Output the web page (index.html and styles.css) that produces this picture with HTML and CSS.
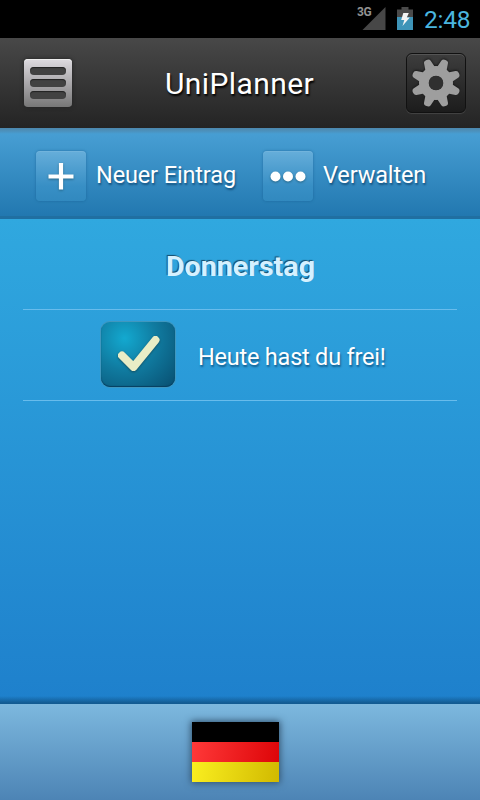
FILE: index.html
```html
<!DOCTYPE html>
<html lang="de">
<head>
<meta charset="utf-8">
<title>UniPlanner</title>
<link rel="stylesheet" href="styles.css">
</head>
<body>
<div class="screen">
  <div class="status">
    <svg class="signal" width="32" height="38" viewBox="0 0 32 38"><path d="M30.500 7V30H7.500Z" fill="#474747"/></svg>
    <span class="network">3G</span>
    <svg class="battery" width="16" height="38" viewBox="0 0 16 38"><path d="M4.500 7h7v2.500H16V17H0V9.500h4.500z" fill="#4a4a4a"/><path d="M0 17h16v13H0z" fill="#3e94b8"/><path d="M6.300 13h5.500l-2 4.600h3L5.500 26l1.800-6H4.200z" fill="#f4f4f4"/></svg>
    <span class="clock">2:48</span>
  </div>
  <header class="header">
    <div class="menu"><i></i><i></i><i></i></div>
    <h1 class="title">UniPlanner</h1>
    <div class="settings">
      <svg class="gear" width="58" height="58" viewBox="-29 -29 58 58">
        <defs><g id="tooth"><path d="M-5.300-14L-3.600-22.500Q-3.200-25 0-25T3.600-22.500L5.300-14Z"/></g></defs>
        <g fill="#9e9e9e">
          <use href="#tooth" transform="rotate(22.500)"/><use href="#tooth" transform="rotate(67.500)"/><use href="#tooth" transform="rotate(112.500)"/><use href="#tooth" transform="rotate(157.500)"/><use href="#tooth" transform="rotate(202.500)"/><use href="#tooth" transform="rotate(247.500)"/><use href="#tooth" transform="rotate(292.500)"/><use href="#tooth" transform="rotate(337.500)"/>
        </g>
        <circle r="12" fill="none" stroke="#9e9e9e" stroke-width="10"/>
        <circle r="7.300" fill="#303030"/>
      </svg>
    </div>
  </header>
  <nav class="toolbar">
    <div class="tile"><svg width="50" height="50" viewBox="0 0 50 50"><path d="M25 12V38.500M12.500 25.500H37.500" stroke="#fff" stroke-width="4.200"/></svg></div>
    <span class="label new">Neuer Eintrag</span>
    <div class="tile second"><svg width="50" height="50" viewBox="0 0 50 50" fill="#fff"><circle cx="12.500" cy="25.500" r="5"/><circle cx="25" cy="25.500" r="5"/><circle cx="37.500" cy="25.500" r="5"/></svg></div>
    <span class="label manage">Verwalten</span>
  </nav>
  <main class="content">
    <h2 class="day">Donnerstag</h2>
    <div class="entry">
      <div class="check"><svg width="74" height="65" viewBox="0 0 74 65"><path d="M21 33.500L32.500 45L54.500 18" fill="none" stroke="#e8edc6" stroke-width="8" stroke-linecap="round" stroke-linejoin="round"/></svg></div>
      <span class="message">Heute hast du frei!</span>
    </div>
  </main>
  <footer class="footer"><div class="flag"><div class="black"></div><div class="red"></div><div class="gold"></div></div></footer>
</div>
</body>
</html>
```
FILE: styles.css
```css
* { box-sizing: border-box; }
body { margin: 0; font-family: Roboto, sans-serif; color: #fff; }
.screen { width: 480px; height: 800px; display: flex; flex-direction: column; overflow: hidden; }
.status { position: relative; height: 38px; background: #000; display: flex; padding-left: 355px; }
.network { position: absolute; left: 357px; top: 6px; font-size: 12px; line-height: 13px; font-weight: 700; letter-spacing: -.3px; color: #929292; }
.battery { margin-left: 10px; }
.clock { margin-left: 11px; font-size: 24.500px; line-height: 40px; letter-spacing: -.2px; color: #4ab5df; white-space: nowrap; }
.header { height: 90px; display: flex; align-items: flex-start; background: linear-gradient(#484848, #242424); }
.menu { width: 48px; height: 48px; margin: 21px 0 0 24px; padding: 8px 6px; border-radius: 4px; display: flex; flex-direction: column; gap: 4px; background: linear-gradient(#dedbe0, #aaa8ab 50%, #777); box-shadow: 0 0 4px #222, inset 0 1px #eee; }
.menu i { display: block; height: 8px; border-radius: 4px; background: #424242; box-shadow: inset 0 1px 1px #222; }
.title { width: 150px; margin: 28px 0 0 93px; font-size: 30px; font-weight: 400; line-height: 36px; letter-spacing: .4px; text-shadow: 1px 2px 2px #000; white-space: nowrap; }
.settings { width: 60px; height: 60px; margin: 15px 0 0 91px; border: 1px solid #111; border-radius: 6px; background: linear-gradient(#3d3d3d, #1c1c1c); box-shadow: 0 1px 1px #444, inset 0 1px #555; }
.gear { display: block; filter: drop-shadow(0 -1px 1px #191919); }
.toolbar { height: 91px; display: flex; align-items: flex-start; padding: 23px 0 0 36px; background: linear-gradient(#4c87ad, #4c91bc 3px, #479ed3 6px, #2278b0 88px, #206fa1 88px, #206fa1); }
.tile { width: 50px; height: 50px; flex: none; border-radius: 4px; background: linear-gradient(#66aeda, #388fc5 70%, #3189bf); box-shadow: 0 0 2px 1px rgba(20,90,140,.3), inset 0 1px rgba(255,255,255,.08); }
.tile svg { display: block; filter: drop-shadow(0 1px 1px #246688); }
.label { height: 32px; margin-top: 8px; font-size: 23.500px; line-height: 32px; letter-spacing: -.13px; white-space: nowrap; text-shadow: 1px 2px 2px rgba(0,50,90,.6); }
.new { width: 141px; margin-left: 10px; }
.second { margin-left: 26px; }
.manage { margin-left: 10px; }
.content { height: 485px; padding: 0 23px; background: linear-gradient(transparent 477px, #125b92 484px), linear-gradient(#30a8df, #1e80cc); }
.day { height: 90px; margin: 0; padding: 30px 0 0 1px; font-size: 28.500px; line-height: 36px; font-weight: 700; letter-spacing: .1px; text-align: center; color: #d5f1ff; text-shadow: -1px -1px 1px #174b68; }
.entry { height: 92px; display: flex; padding: 12px 0 0 78px; border-top: 1px solid #68bcec; border-bottom: 1px solid #68bcec; }
.check { width: 74px; height: 65px; flex: none; border-radius: 9px; background: radial-gradient(circle at 32% 25%, #13a9d0, #107ba0 45%, #084e70 100%); box-shadow: 0 0 0 1px #4097be, inset 0 -1px 1px #073f60; }
.check svg { display: block; filter: drop-shadow(0 1px 1px #155063); }
.message { margin: 19px 0 0 23px; font-size: 23.500px; line-height: 32px; letter-spacing: -.22px; white-space: nowrap; text-shadow: 1px 2px 2px rgba(0,50,90,.6); }
.footer { height: 96px; display: flex; justify-content: center; padding: 18px 9px 0 0; background: linear-gradient(#7db8de, #4d84b5); }
.flag { width: 87px; height: 60px; box-shadow: 0 0 7px 1px #31516d; }
.flag div { height: 20px; }
.black { background: #000; }
.red { background: linear-gradient(100deg, #ff3939, #dd0508); }
.gold { background: linear-gradient(100deg, #faef20, #d1b900); }
```
